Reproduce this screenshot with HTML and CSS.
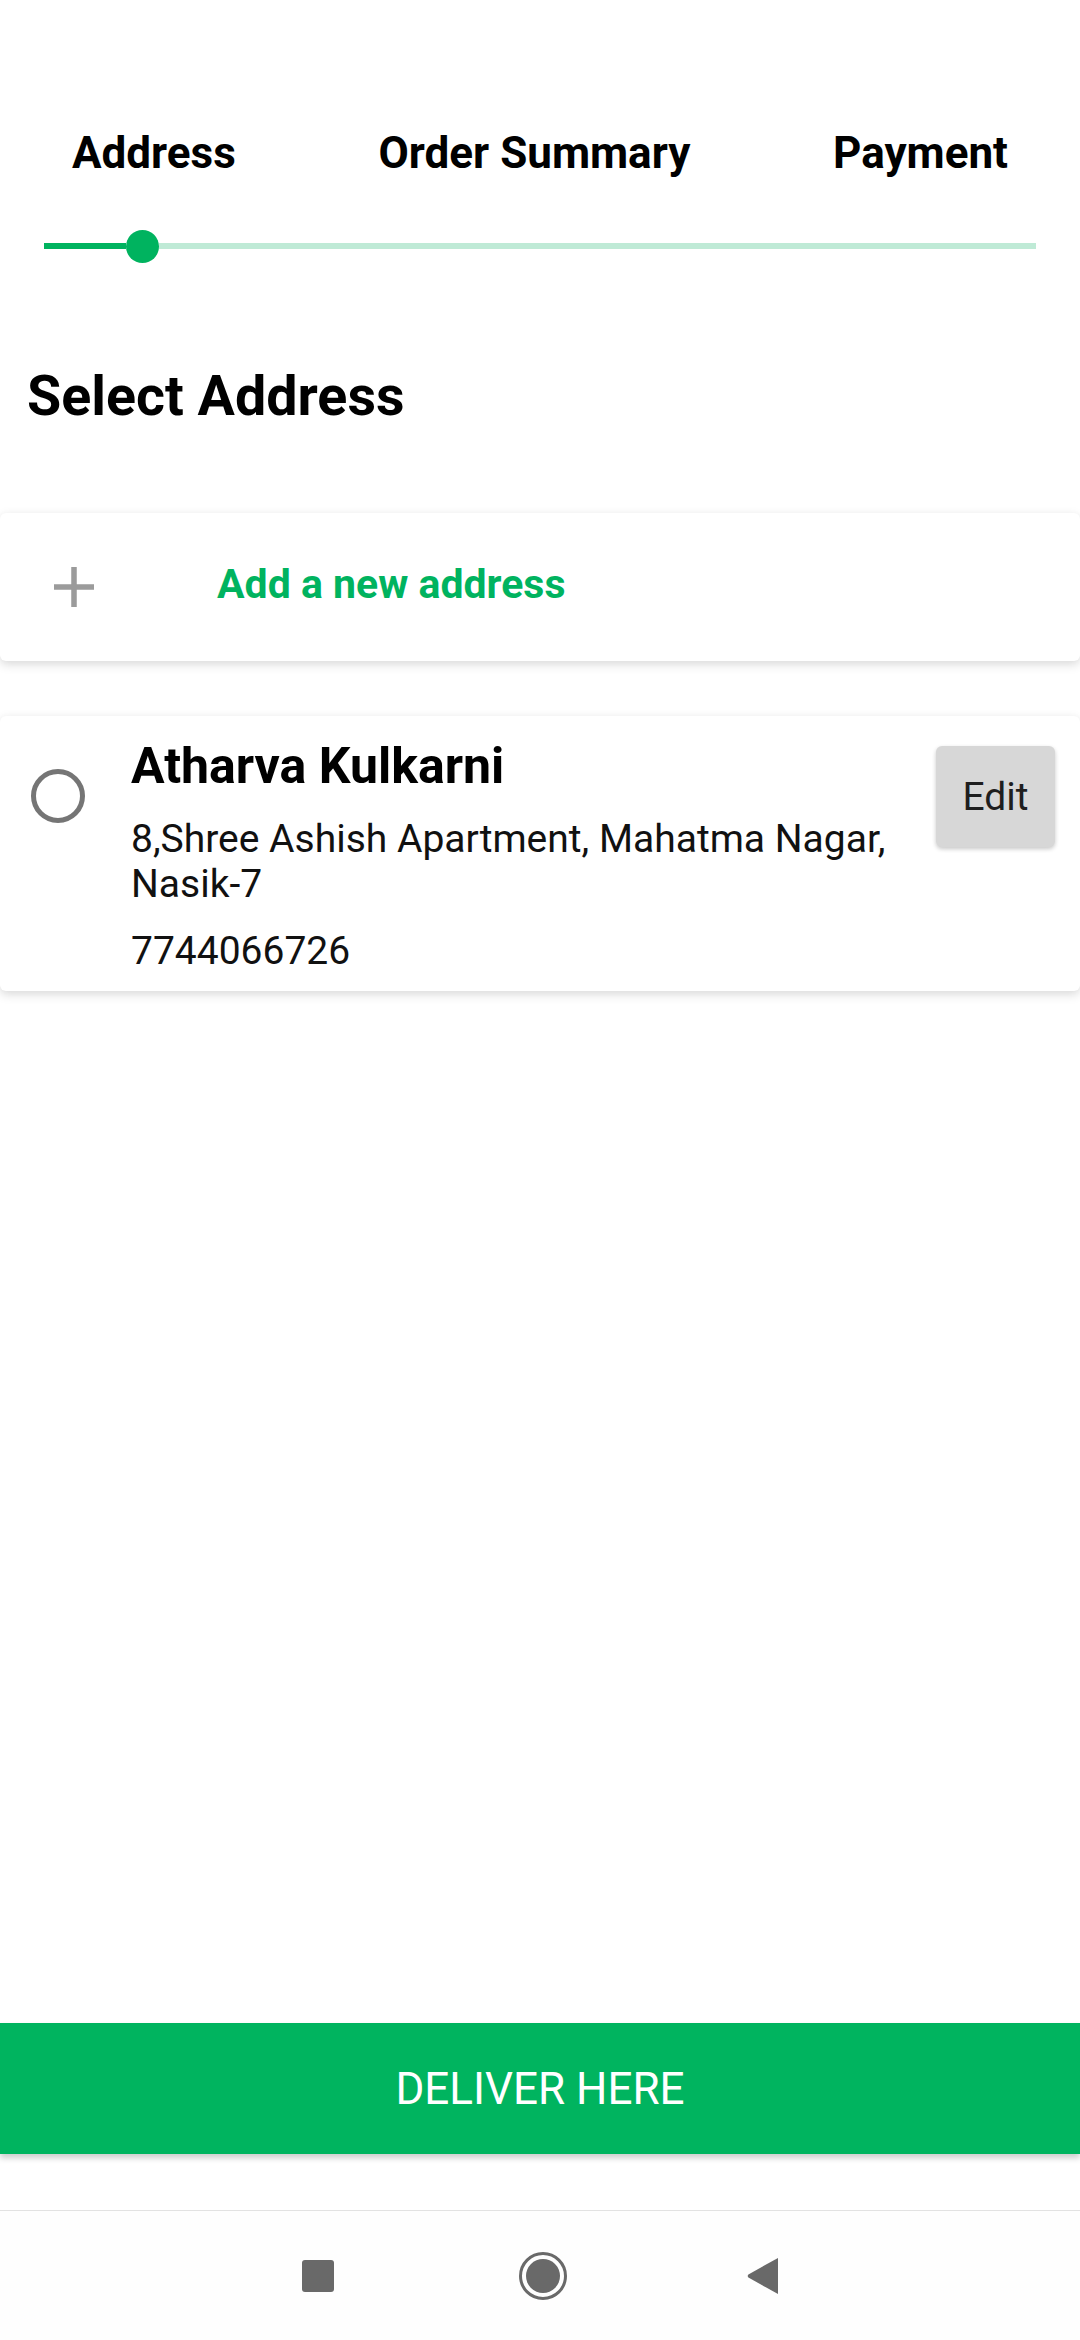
FILE: index.html
```html
<!DOCTYPE html>
<html lang="en">
<head>
<meta charset="utf-8">
<title>Select Address</title>
<link rel="stylesheet" href="styles.css">
</head>
<body>
<div class="screen">
  <nav class="steps">
    <span class="step">Address</span>
    <span class="step">Order Summary</span>
    <span class="step">Payment</span>
  </nav>
  <div class="progress">
    <div class="progress-done"></div>
    <div class="progress-dot"></div>
    <div class="progress-rest"></div>
  </div>
  <h1 class="title">Select Address</h1>
  <div class="add-card">
    <svg class="plus" width="40" height="40" viewBox="0 0 40 40"><path d="M0 20H40M20 0V40" stroke="#9b9b9b" stroke-width="5.5" fill="none"/></svg>
    <span class="add-text">Add a new address</span>
  </div>
  <div class="addr-card">
    <div class="radio"></div>
    <div class="addr-info">
      <div class="addr-name">Atharva Kulkarni</div>
      <div class="addr-line">8,Shree Ashish Apartment, Mahatma Nagar, Nasik-7</div>
      <div class="addr-phone">7744066726</div>
    </div>
    <button class="edit-btn">Edit</button>
  </div>
  <div class="spacer"></div>
  <button class="deliver">DELIVER HERE</button>
  <div class="bottom-gap"></div>
  <div class="navbar">
    <span class="nav-square"></span>
    <svg class="nav-home" width="48" height="48" viewBox="0 0 48 48"><circle cx="24" cy="24" r="22.5" fill="none" stroke="#696969" stroke-width="3"/><circle cx="24" cy="24" r="17" fill="#696969"/></svg>
    <svg class="nav-back" width="31" height="36" viewBox="0 0 31 36"><path d="M31 0V36L1.4 19.6Q0 18 1.4 16.4Z" fill="#696969"/></svg>
  </div>
</div>
</body>
</html>
```
FILE: styles.css
```css
* { box-sizing: border-box; }
html, body { margin: 0; padding: 0; background: #ffffff; }
body { font-family: Roboto, "Liberation Sans", sans-serif; color: #000; }

.screen {
  width: 1080px;
  height: 2340px;
  display: flex;
  flex-direction: column;
}

.steps {
  padding: 127px 72px 0;
  display: flex;
  justify-content: space-between;
  font-size: 44px;
  line-height: 52px;
  font-weight: 700;
}

.progress {
  margin: 50px 44px 0;
  height: 34px;
  display: flex;
  align-items: center;
}
.progress-done { width: 82px; height: 6px; background: #00b35f; }
.progress-dot { width: 33px; height: 33px; border-radius: 50%; background: #00b35f; }
.progress-rest { flex: 1; height: 6px; background: #bfead6; }

.title {
  margin: 101px 0 0;
  padding-left: 27px;
  font-size: 55.6px;
  line-height: 64px;
  font-weight: 700;
}

.add-card {
  margin-top: 85px;
  height: 148px;
  display: flex;
  align-items: center;
  background: #fff;
  border-radius: 6px;
  box-shadow: 0 5px 10px rgba(0,0,0,0.10), 0 0 8px rgba(0,0,0,0.06);
}
.plus { margin-left: 54px; flex: none; }
.add-text {
  margin-left: 123px;
  margin-bottom: 6px;
  font-size: 41px;
  font-weight: 700;
  color: #00b35f;
}

.addr-card {
  margin-top: 55px;
  display: flex;
  align-items: flex-start;
  padding: 21px 25px 17px 31px;
  background: #fff;
  border-radius: 6px;
  box-shadow: 0 5px 10px rgba(0,0,0,0.10), 0 0 8px rgba(0,0,0,0.06);
}
.radio {
  flex: none;
  width: 54px;
  height: 54px;
  margin-top: 32px;
  border: 5px solid #757575;
  border-radius: 50%;
}
.addr-info { flex: 1; margin-left: 46px; margin-right: 12px; }
.addr-name { font-size: 50px; line-height: 58px; font-weight: 700; }
.addr-line { margin-top: 22px; font-size: 39px; line-height: 45px; color: #111; }
.addr-phone { margin-top: 22px; font-size: 39px; line-height: 45px; color: #111; }
.edit-btn {
  flex: none;
  margin-top: 9px;
  width: 119px;
  height: 101px;
  border: none;
  border-radius: 6px;
  background: #d7d7d7;
  box-shadow: 0 2px 4px rgba(0,0,0,0.22);
  font-family: Roboto, "Liberation Sans", sans-serif;
  font-size: 39px;
  color: #1e1e1e;
  padding: 0;
}

.spacer { flex: 1; }

.deliver {
  flex: none;
  height: 131px;
  width: 100%;
  border: none;
  background: #00b45f;
  color: #fff;
  font-family: Roboto, "Liberation Sans", sans-serif;
  font-size: 44px;
  font-weight: 400;
  box-shadow: 0 4px 6px rgba(0,0,0,0.2);
  padding: 0;
}

.bottom-gap { flex: none; height: 57px; border-bottom: 1px solid #e2e2e2; }

.navbar {
  flex: none;
  height: 129px;
  display: flex;
  align-items: center;
  justify-content: center;
  background: #fefefe;
}
.nav-square { width: 32px; height: 32px; background: #696969; border-radius: 3px; }
.nav-home { margin-left: 185px; }
.nav-back { margin-left: 180px; }
```
